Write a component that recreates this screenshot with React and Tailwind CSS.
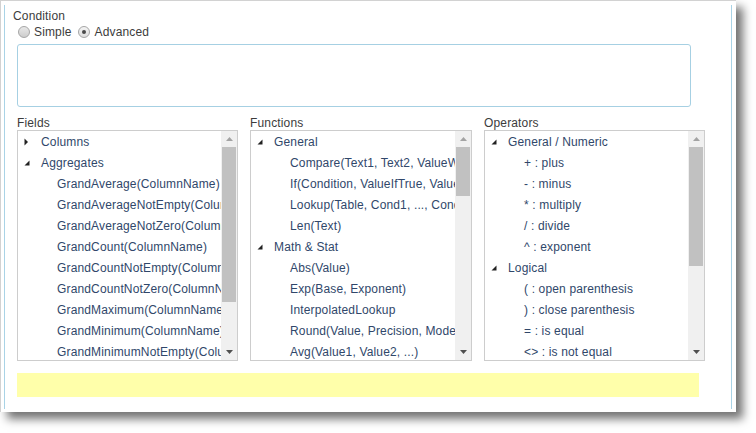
import React from "react";

const font = { fontFamily: '"Liberation Sans", Arial, sans-serif', letterSpacing: "0.15px" };

function Collapsed() {
  return (
    <svg width="5" height="8" viewBox="0 0 5 8" className="block">
      <polygon points="0.5,0.5 4,4 0.5,7.5" fill="#222" />
    </svg>
  );
}
function Expanded() {
  return (
    <svg width="6" height="6" viewBox="0 0 6 6" className="block">
      <polygon points="5.5,0.5 5.5,5.5 0.5,5.5" fill="#222" />
    </svg>
  );
}

function Row({ group, open, text }) {
  if (group) {
    return (
      <div className="flex items-center h-[21px] whitespace-nowrap pl-[6px]">
        <div className="w-[17px] flex items-center">{open ? <Expanded /> : <Collapsed />}</div>
        <span>{text}</span>
      </div>
    );
  }
  return <div className="flex items-center h-[21px] whitespace-nowrap pl-[39px]">{text}</div>;
}

function ListBox({ rows, thumbTop, thumbHeight }) {
  return (
    <div className="h-[231px] border border-[#cdcdcd] bg-white flex overflow-hidden">
      <div className="flex-1 overflow-hidden text-[12px] text-[#30476a]">
        {rows.map((r, i) => (
          <Row key={i} {...r} />
        ))}
      </div>
      <div className="w-[16px] bg-[#f0f0f0] relative flex flex-col">
        <div className="h-[16px] flex items-center justify-center">
          <svg width="7" height="4" viewBox="0 0 7 4">
            <polygon points="0,4 3.5,0 7,4" fill="#a3a3a3" />
          </svg>
        </div>
        <div className="flex-1 relative">
          <div
            className="absolute left-[1px] right-[1px] bg-[#c1c1c1]"
            style={{ top: thumbTop, height: thumbHeight }}
          />
        </div>
        <div className="h-[16px] flex items-center justify-center">
          <svg width="7" height="4" viewBox="0 0 7 4">
            <polygon points="0,0 3.5,4 7,0" fill="#505050" />
          </svg>
        </div>
      </div>
    </div>
  );
}

const fields = [
  { group: true, open: false, text: "Columns" },
  { group: true, open: true, text: "Aggregates" },
  { text: "GrandAverage(ColumnName)" },
  { text: "GrandAverageNotEmpty(ColumnName)" },
  { text: "GrandAverageNotZero(ColumnName)" },
  { text: "GrandCount(ColumnName)" },
  { text: "GrandCountNotEmpty(ColumnName)" },
  { text: "GrandCountNotZero(ColumnName)" },
  { text: "GrandMaximum(ColumnName)" },
  { text: "GrandMinimum(ColumnName)" },
  { text: "GrandMinimumNotEmpty(ColumnName)" },
];

const functions = [
  { group: true, open: true, text: "General" },
  { text: "Compare(Text1, Text2, ValueWhenEqual)" },
  { text: "If(Condition, ValueIfTrue, ValueIfFalse)" },
  { text: "Lookup(Table, Cond1, ..., CondN)" },
  { text: "Len(Text)" },
  { group: true, open: true, text: "Math & Stat" },
  { text: "Abs(Value)" },
  { text: "Exp(Base, Exponent)" },
  { text: "InterpolatedLookup" },
  { text: "Round(Value, Precision, Mode)" },
  { text: "Avg(Value1, Value2, ...)" },
];

const operators = [
  { group: true, open: true, text: "General / Numeric" },
  { text: "+ : plus" },
  { text: "- : minus" },
  { text: "* : multiply" },
  { text: "/ : divide" },
  { text: "^ : exponent" },
  { group: true, open: true, text: "Logical" },
  { text: "( : open parenthesis" },
  { text: ") : close parenthesis" },
  { text: "= : is equal" },
  { text: "<> : is not equal" },
];

export default function App() {
  return (
    <div className="w-[756px] h-[433px] bg-white overflow-hidden" style={font}>
      <div className="w-[736px] h-[412px] bg-white border-t border-l border-[#d2d2d2] shadow-[7px_7px_9px_rgba(0,0,0,0.55)] pt-[4px] pl-[3px]">
        <div className="w-[728px] h-[404px] border-l border-r border-[#a9d3e6] text-[12px] text-[#3c3c3c]">
          <div className="pl-[8px] pt-[4px] leading-[14px]">Condition</div>
          <div className="flex items-center h-[14px] mt-[2px] pl-[13px] leading-[14px]">
            <div className="w-[12px] h-[12px] rounded-full border border-[#a6a6a6] bg-gradient-to-b from-[#e8e8e8] to-[#cdcdcd]" />
            <span className="ml-[4px]">Simple</span>
            <div className="ml-[6px] w-[12px] h-[12px] rounded-full border border-[#a6a6a6] bg-gradient-to-b from-[#f4f4f4] to-[#dedede] flex items-center justify-center">
              <div className="w-[4px] h-[4px] rounded-full bg-[#4a4a4a]" />
            </div>
            <span className="ml-[5px]">Advanced</span>
          </div>
          <div className="ml-[12px] mt-[5px] w-[674px] h-[63px] border border-[#a6d0e3] rounded-[3px] bg-white" />
          <div className="flex gap-[12px] ml-[12px] mt-[9px]">
            <div className="w-[221px]">
              <div className="leading-[14px] h-[14px]">Fields</div>
              <ListBox rows={fields} thumbTop={0} thumbHeight={155} />
            </div>
            <div className="w-[222px]">
              <div className="leading-[14px] h-[14px]">Functions</div>
              <ListBox rows={functions} thumbTop={0} thumbHeight={49} />
            </div>
            <div className="w-[221px]">
              <div className="leading-[14px] h-[14px]">Operators</div>
              <ListBox rows={operators} thumbTop={0} thumbHeight={119} />
            </div>
          </div>
          <div className="ml-[12px] mt-[12px] w-[682px] h-[24px] bg-[#ffffaa]" />
        </div>
      </div>
    </div>
  );
}
